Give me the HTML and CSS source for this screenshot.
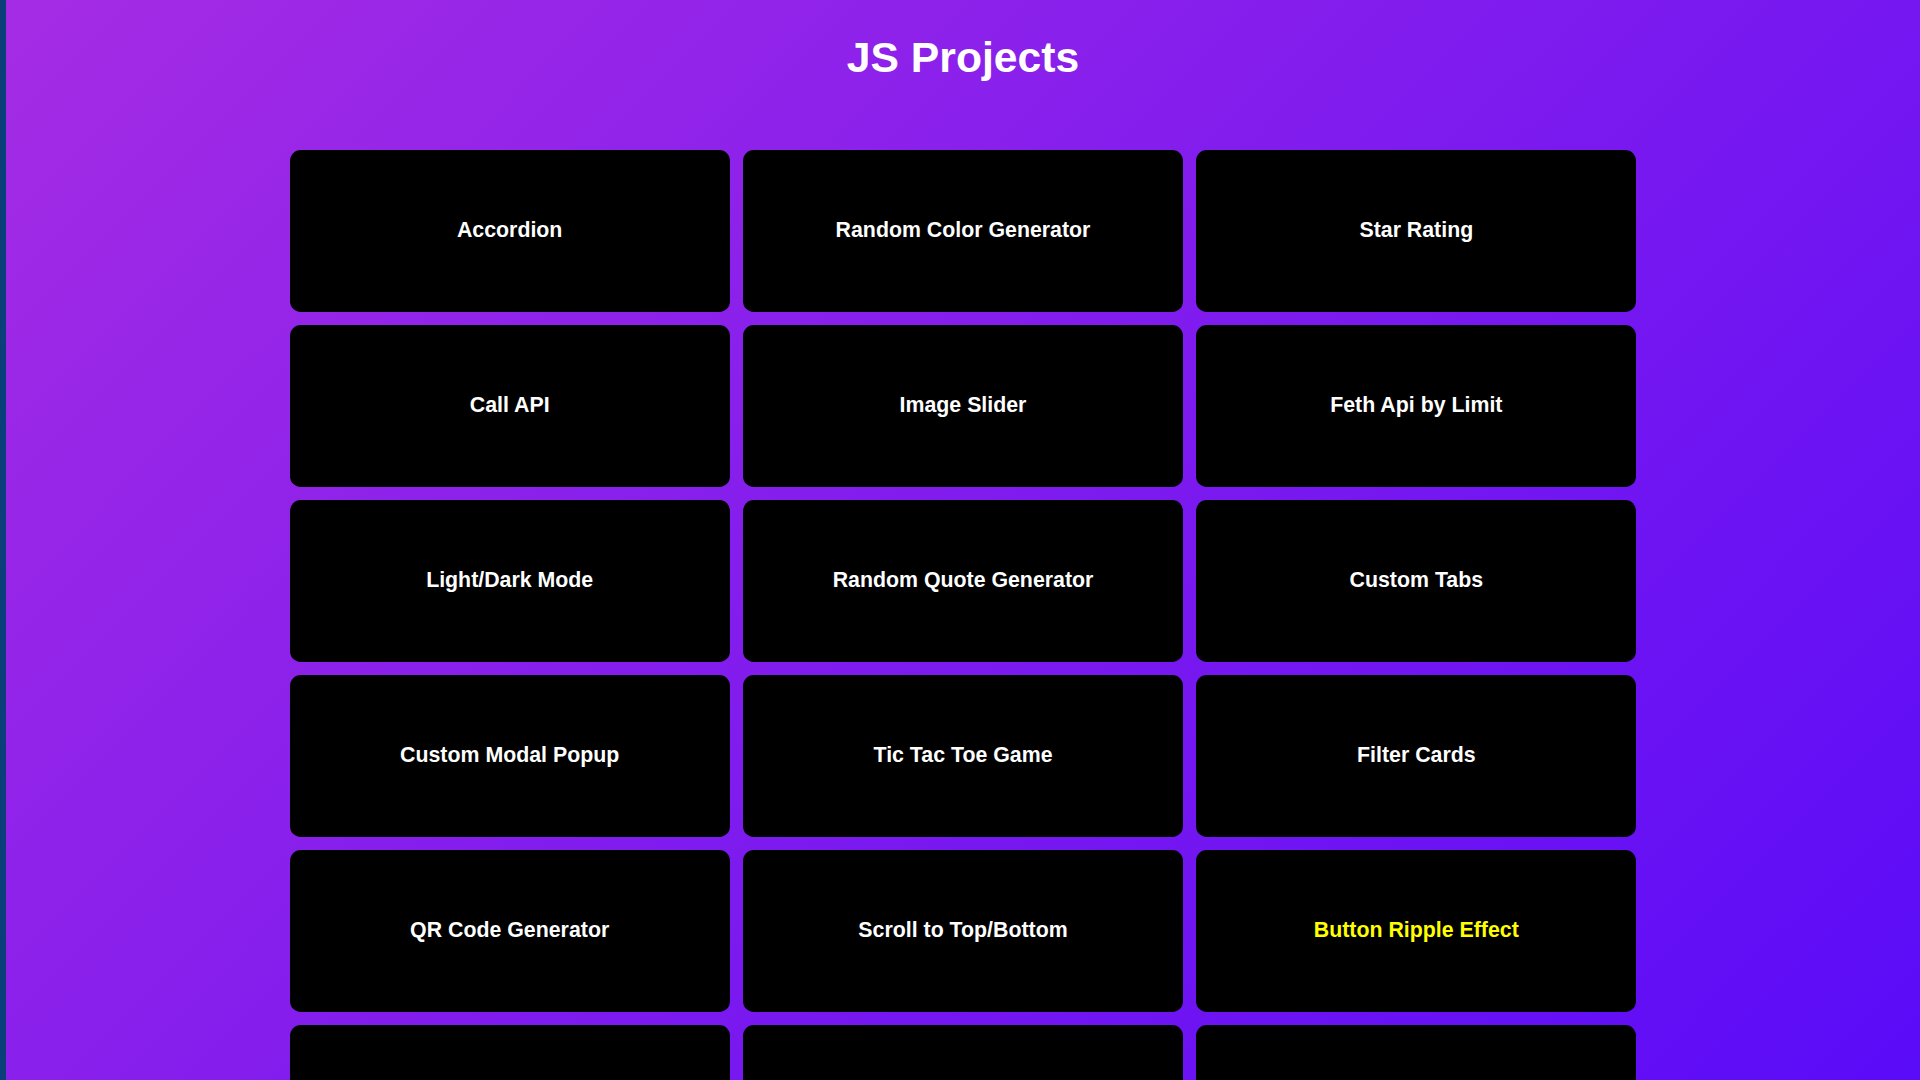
FILE: index.html
```html
<!DOCTYPE html>
<html lang="en">
<head>
<meta charset="UTF-8">
<title>JS Projects</title>
<link rel="stylesheet" href="styles.css">
</head>
<body>
<div class="page">
  <h1 class="title">JS Projects</h1>
  <div class="grid">
    <div class="card">Accordion</div>
    <div class="card">Random Color Generator</div>
    <div class="card">Star Rating</div>
    <div class="card">Call API</div>
    <div class="card">Image Slider</div>
    <div class="card">Feth Api by Limit</div>
    <div class="card">Light/Dark Mode</div>
    <div class="card">Random Quote Generator</div>
    <div class="card">Custom Tabs</div>
    <div class="card">Custom Modal Popup</div>
    <div class="card">Tic Tac Toe Game</div>
    <div class="card">Filter Cards</div>
    <div class="card">QR Code Generator</div>
    <div class="card">Scroll to Top/Bottom</div>
    <div class="card card-active">Button Ripple Effect</div>
    <div class="card"></div>
    <div class="card"></div>
    <div class="card"></div>
  </div>
</div>
</body>
</html>
```
FILE: styles.css
```css
html, body {
  margin: 0;
  padding: 0;
  height: 100%;
  overflow: hidden;
}

body {
  font-family: "Liberation Sans", Arial, sans-serif;
  background: #0a3f7a;
}

.page {
  box-sizing: border-box;
  height: 100vh;
  margin-left: 6px;
  overflow: hidden;
  padding-top: 32.5px;
  background: linear-gradient(135deg, #a52ce4 0%, #5a0bf8 100%);
  background-attachment: fixed;
  display: flex;
  flex-direction: column;
  align-items: center;
}

.title {
  margin: 0;
  font-size: 42.67px;
  font-weight: bold;
  line-height: normal;
  color: #ffffff;
  text-align: center;
}

.grid {
  margin-top: 68.5px;
  display: grid;
  grid-template-columns: repeat(3, 440px);
  grid-auto-rows: 161.67px;
  gap: 13.33px;
}

.card {
  background: #000000;
  border-radius: 10.67px;
  display: flex;
  align-items: center;
  justify-content: center;
  color: #ffffff;
  font-size: 21.33px;
  font-weight: bold;
  line-height: normal;
}

.card-active {
  color: #ffff00;
}
```
